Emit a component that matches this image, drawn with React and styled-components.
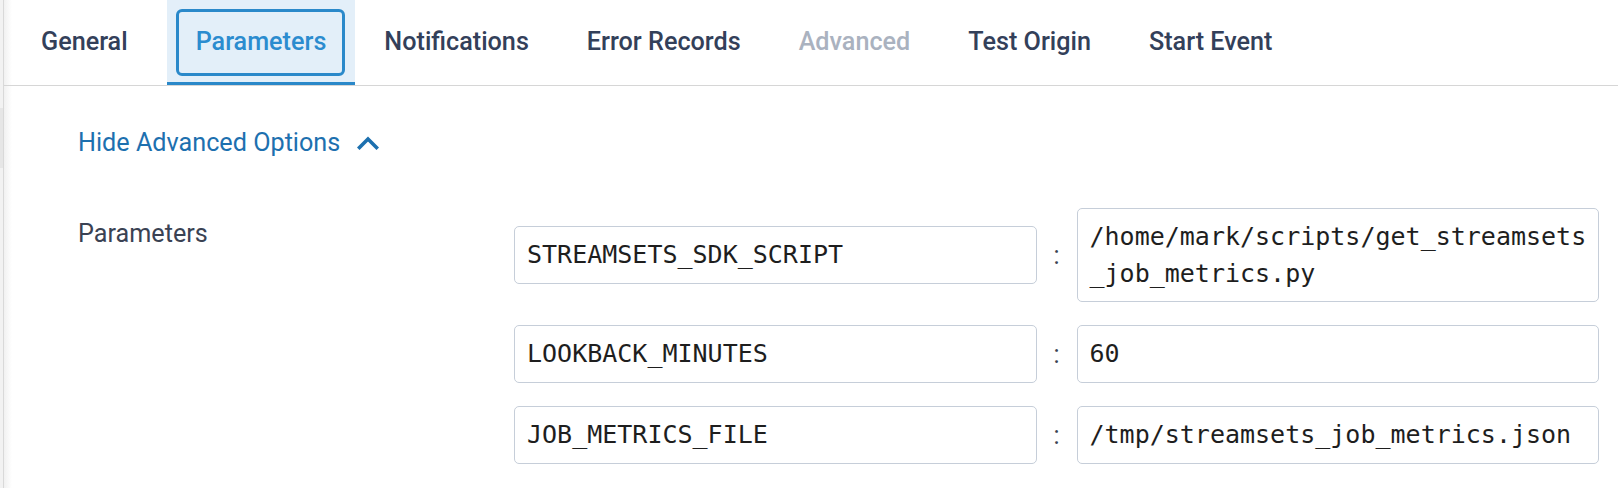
import React from "react";
import styled, { createGlobalStyle, css } from "styled-components";

const GlobalStyle = createGlobalStyle`
  html, body {
    margin: 0;
    padding: 0;
    background: #ffffff;
  }
  body {
    font-family: Roboto, "Liberation Sans", sans-serif;
  }
`;

const Page = styled.div`
  display: flex;
  width: 100%;
  min-height: 488px;
`;

const EdgeRail = styled.div`
  flex-shrink: 0;
  width: 3px;
  background: #f2f2f2;
  border-right: 1px solid #d9d9d9;
  display: flex;
  flex-direction: column;
`;

const EdgeMarker = styled.div`
  margin-top: 108px;
  height: 60px;
  background: #e6e6e6;
`;

const Main = styled.div`
  flex: 1;
  min-width: 0;
  background: linear-gradient(to right, #f1f1f1 0, #ffffff 8px);
`;

const TabBar = styled.nav`
  display: flex;
  height: 85px;
  padding-left: 8px;
  border-bottom: 1px solid #d6d6d6;
`;

const Tab = styled.div`
  position: relative;
  display: flex;
  align-items: center;
  padding: 1px 29px 0;
  font-size: 25.2px;
  font-weight: 500;
  color: ${(p) => (p.$disabled ? "#aab2bf" : "#33405a")};
  border-bottom: 3px solid transparent;
  white-space: nowrap;

  &:first-child {
    margin-right: 10px;
  }

  ${(p) =>
    p.$active &&
    css`
      background: #e3eff9;
      color: #2b8ccf;
      border-bottom-color: #2a88c9;

      &::after {
        content: "";
        position: absolute;
        top: 9px;
        left: 9px;
        right: 10px;
        bottom: 6px;
        border: 3px solid #2a89ca;
        border-radius: 6px;
      }
    `}
`;

const Content = styled.div`
  padding: 38px 19px 40px 74px;
`;

const Toggle = styled.div`
  display: inline-flex;
  align-items: center;
  gap: 17px;
  font-size: 25.2px;
  line-height: 38px;
  color: #1d70af;
`;

const FormRow = styled.div`
  margin-top: 46px;
  display: grid;
  grid-template-columns: 436px 1fr;
`;

const FieldLabel = styled.div`
  padding-top: 7px;
  font-size: 25.2px;
  line-height: 38px;
  color: #3a4253;
`;

const ParamList = styled.div`
  display: flex;
  flex-direction: column;
  gap: 23px;
`;

const ParamRow = styled.div`
  display: grid;
  grid-template-columns: 1fr 40px 1fr;
  align-items: center;
`;

const Field = styled.div`
  border: 1px solid #c6ced9;
  border-radius: 5px;
  padding: 9px 12px;
  font-family: "DejaVu Sans Mono", "Liberation Mono", monospace;
  font-size: 25px;
  line-height: ${(p) => (p.$multi ? "37px" : "38px")};
  color: #1e1e1e;
  white-space: pre;
  overflow: hidden;
  background: #ffffff;
`;

const Colon = styled.div`
  text-align: center;
  font-size: 25px;
  color: #3a4253;
`;

const Chevron = () => (
  <svg width="22" height="14" viewBox="0 0 22 14" aria-hidden="true">
    <polyline
      points="2.5,11.5 11,3 19.5,11.5"
      fill="none"
      stroke="#1d70af"
      strokeWidth="3.6"
      strokeLinecap="square"
      strokeLinejoin="miter"
    />
  </svg>
);

const tabs = [
  { label: "General" },
  { label: "Parameters", active: true },
  { label: "Notifications" },
  { label: "Error Records" },
  { label: "Advanced", disabled: true },
  { label: "Test Origin" },
  { label: "Start Event" },
];

const params = [
  {
    key: "STREAMSETS_SDK_SCRIPT",
    value: "/home/mark/scripts/get_streamsets\n_job_metrics.py",
    multi: true,
  },
  { key: "LOOKBACK_MINUTES", value: "60" },
  { key: "JOB_METRICS_FILE", value: "/tmp/streamsets_job_metrics.json" },
];

export default function App() {
  return (
    <>
      <GlobalStyle />
      <Page>
        <EdgeRail>
          <EdgeMarker />
        </EdgeRail>
        <Main>
          <TabBar>
            {tabs.map((t) => (
              <Tab key={t.label} $active={t.active} $disabled={t.disabled}>
                {t.label}
              </Tab>
            ))}
          </TabBar>
          <Content>
            <Toggle>
              Hide Advanced Options
              <Chevron />
            </Toggle>
            <FormRow>
              <FieldLabel>Parameters</FieldLabel>
              <ParamList>
                {params.map((p) => (
                  <ParamRow key={p.key}>
                    <Field>{p.key}</Field>
                    <Colon>:</Colon>
                    <Field $multi={p.multi}>{p.value}</Field>
                  </ParamRow>
                ))}
              </ParamList>
            </FormRow>
          </Content>
        </Main>
      </Page>
    </>
  );
}
